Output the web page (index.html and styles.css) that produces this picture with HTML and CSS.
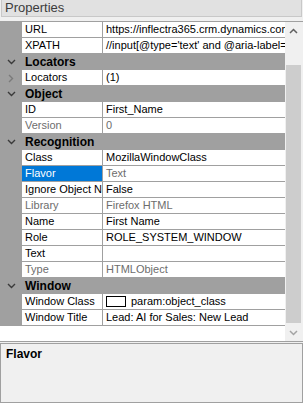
FILE: index.html
```html
<!DOCTYPE html>
<html lang="en">
<head>
    <meta charset="UTF-8">
    <title>Properties</title>
    <link rel="stylesheet" href="styles.css">
</head>
<body>
    <div class="title">Properties</div>

    <div class="grid-box">
        <div class="grid">
            <div class="row"><span class="gut"></span><span class="name">URL</span><span class="val">https://inflectra365.crm.dynamics.com</span></div>
            <div class="row"><span class="gut"></span><span class="name">XPATH</span><span class="val">//input[@type='text' and @aria-label='First Name']</span></div>

            <div class="cat"><svg class="chev" width="9" height="6" viewBox="0 0 9 6"><polyline points="1,1 4.5,4.5 8,1" /></svg>Locators</div>
            <div class="row"><span class="gut"><svg class="chev-r" width="6" height="9" viewBox="0 0 6 9"><polyline points="1,1 4.5,4.5 1,8" /></svg></span><span class="name">Locators</span><span class="val">(1)</span></div>

            <div class="cat"><svg class="chev" width="9" height="6" viewBox="0 0 9 6"><polyline points="1,1 4.5,4.5 8,1" /></svg>Object</div>
            <div class="row"><span class="gut"></span><span class="name">ID</span><span class="val">First_Name</span></div>
            <div class="row ro"><span class="gut"></span><span class="name">Version</span><span class="val">0</span></div>

            <div class="cat"><svg class="chev" width="9" height="6" viewBox="0 0 9 6"><polyline points="1,1 4.5,4.5 8,1" /></svg>Recognition</div>
            <div class="row"><span class="gut"></span><span class="name">Class</span><span class="val">MozillaWindowClass</span></div>
            <div class="row ro selected"><span class="gut"></span><span class="name">Flavor</span><span class="val">Text</span></div>
            <div class="row"><span class="gut"></span><span class="name">Ignore Object Name</span><span class="val">False</span></div>
            <div class="row ro"><span class="gut"></span><span class="name">Library</span><span class="val">Firefox HTML</span></div>
            <div class="row"><span class="gut"></span><span class="name">Name</span><span class="val">First Name</span></div>
            <div class="row"><span class="gut"></span><span class="name">Role</span><span class="val">ROLE_SYSTEM_WINDOW</span></div>
            <div class="row"><span class="gut"></span><span class="name">Text</span><span class="val"></span></div>
            <div class="row ro"><span class="gut"></span><span class="name">Type</span><span class="val">HTMLObject</span></div>

            <div class="cat"><svg class="chev" width="9" height="6" viewBox="0 0 9 6"><polyline points="1,1 4.5,4.5 8,1" /></svg>Window</div>
            <div class="row"><span class="gut"></span><span class="name">Window Class</span><span class="val"><span class="swatch"></span>param:object_class</span></div>
            <div class="row"><span class="gut"></span><span class="name">Window Title</span><span class="val">Lead: AI for Sales: New Lead</span></div>
        </div>

        <div class="scrollbar">
            <div class="arrow up"><svg width="9" height="6" viewBox="0 0 9 6"><polyline points="1,5 4.5,1.5 8,5" /></svg></div>
            <div class="track">
                <div class="thumb"></div>
            </div>
            <div class="arrow down"><svg width="9" height="6" viewBox="0 0 9 6"><polyline points="1,1 4.5,4.5 8,1" /></svg></div>
        </div>
    </div>

    <div class="desc">
        <div class="desc-title">Flavor</div>
    </div>
</body>
</html>
```

FILE: styles.css
```css
* {
    margin: 0;
    padding: 0;
    box-sizing: border-box;
}

body {
    width: 303px;
    height: 403px;
    background-color: #f0f0f0;
    font-family: 'Liberation Sans', Arial, sans-serif;
    font-size: 11px;
    color: #000;
    overflow: hidden;
}

.title {
    height: 17px;
    margin: 0 1px;
    padding-left: 3px;
    background-color: #e1e1e1;
    border: 1px solid #c8c8c8;
    border-top: none;
    color: #3c3c3c;
    font-size: 13px;
    line-height: 16px;
}

.grid-box {
    display: flex;
    height: 321px;
    margin-top: 4px;
    background-color: #fff;
    border-top: 1px solid #a0a0a0;
    border-bottom: 1px solid #a0a0a0;
}

.grid {
    flex: 1;
    overflow: hidden;
}

.row {
    display: grid;
    grid-template-columns: 22px 81px 1fr;
    height: 16px;
    line-height: 15px;
}

.gut {
    background-color: #a0a0a0;
    display: flex;
    align-items: center;
    justify-content: center;
}

.name,
.val {
    white-space: nowrap;
    overflow: hidden;
    border-bottom: 1px solid #a0a0a0;
    padding-left: 3px;
}

.name {
    border-right: 1px solid #a0a0a0;
}

.val {
    display: flex;
    align-items: center;
}

.ro .name,
.ro .val {
    color: #6d6d6d;
}

.selected .name {
    background-color: #0078d7;
    color: #fff;
}

.cat {
    display: flex;
    align-items: center;
    height: 16px;
    background-color: #a0a0a0;
    font-weight: bold;
    font-size: 12px;
}

.chev {
    margin: 0 9px 0 7px;
    fill: none;
    stroke: #3a3a3a;
    stroke-width: 1.4;
}

.chev-r {
    fill: none;
    stroke: #7a7a7a;
    stroke-width: 1.4;
}

.swatch {
    display: inline-block;
    width: 20px;
    height: 11px;
    border: 1px solid #000;
    background-color: #fff;
    margin-right: 5px;
}

.scrollbar {
    width: 18px;
    display: flex;
    flex-direction: column;
    background-color: #f0f0f0;
    border-right: 1px solid #f0f0f0;
}

.arrow {
    height: 17px;
    display: flex;
    align-items: center;
    justify-content: center;
}

.arrow svg {
    fill: none;
    stroke-width: 1.5;
}

.up svg {
    stroke: #606060;
}

.down svg {
    stroke: #a3a3a3;
}

.track {
    flex: 1;
    padding: 26px 1px 1px 1px;
}

.thumb {
    height: 100%;
    background-color: #cdcdcd;
}

.desc {
    height: 60px;
    margin-top: 1px;
    border: 1px solid #a0a0a0;
    background-color: #f0f0f0;
    padding: 3px 5px;
}

.desc-title {
    font-weight: bold;
    font-size: 12px;
}
```
